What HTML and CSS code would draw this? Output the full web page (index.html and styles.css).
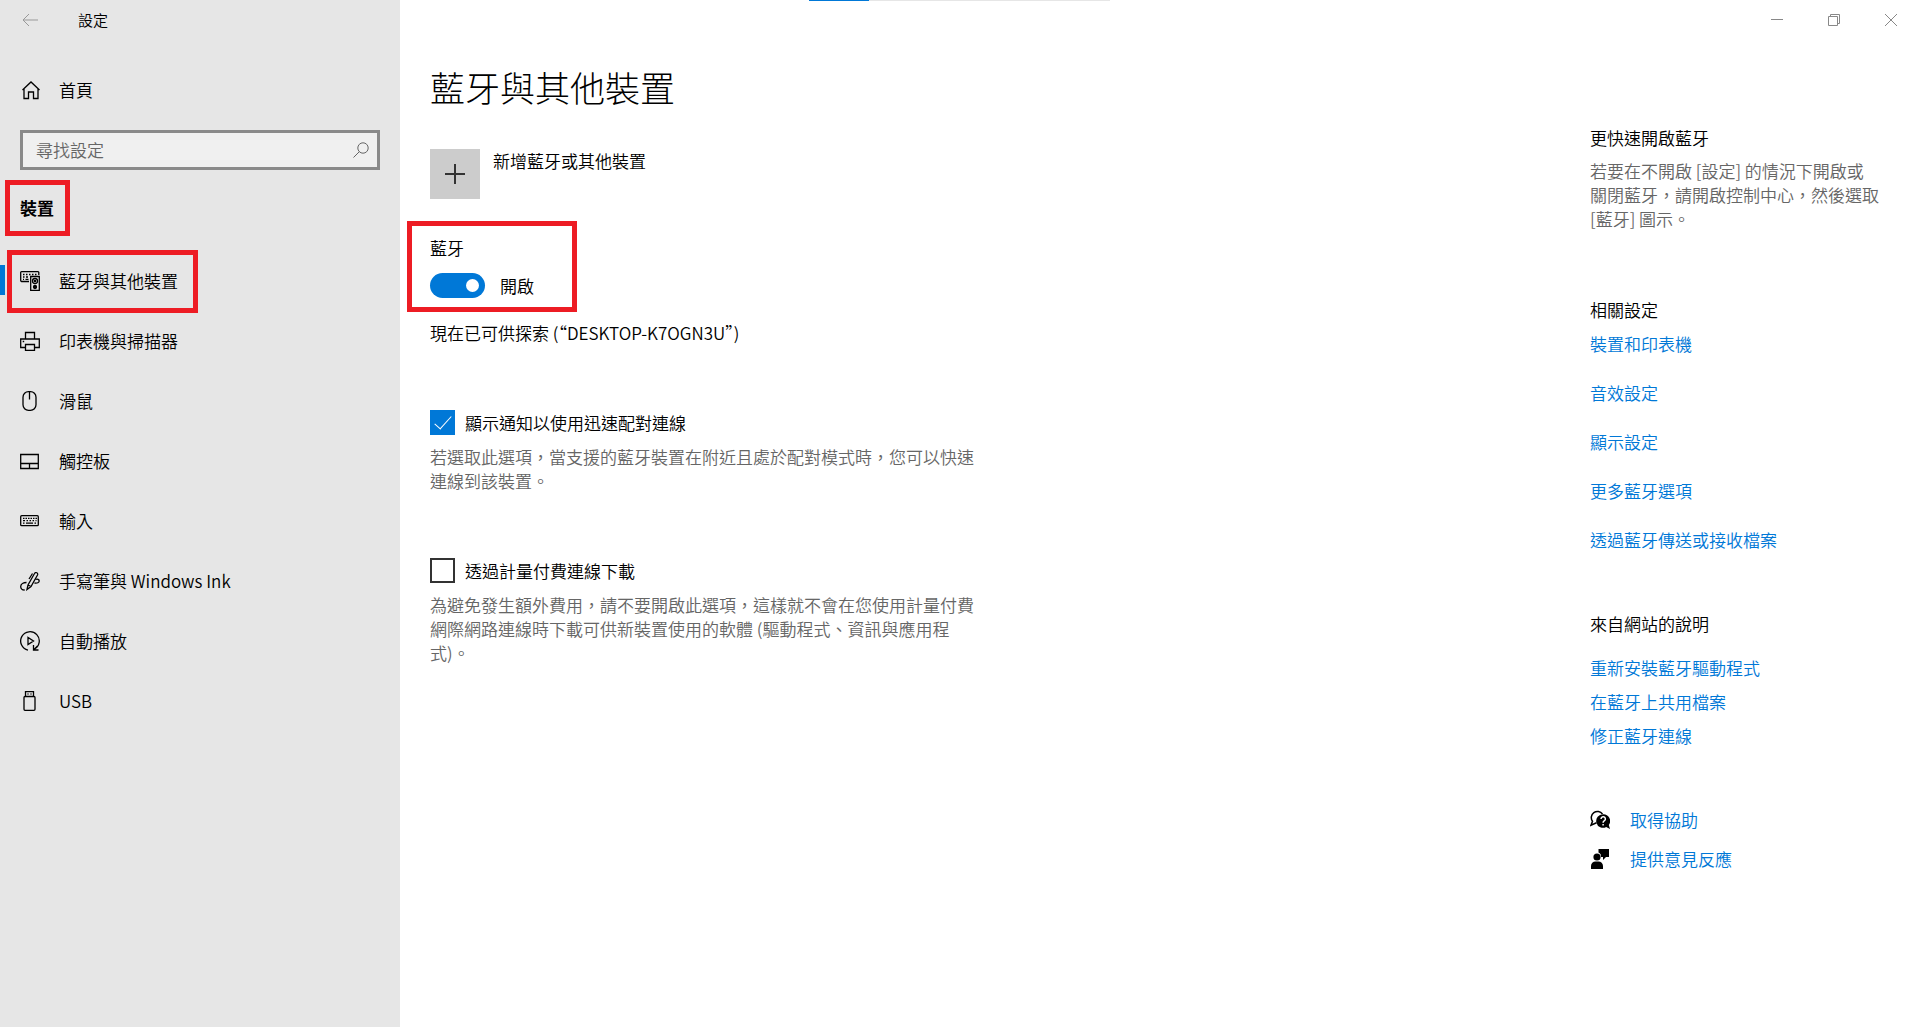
FILE: index.html
```html
<!DOCTYPE html>
<html lang="zh-Hant">
<head>
    <meta charset="UTF-8">
    <meta name="viewport" content="width=device-width, initial-scale=1">
    <title>設定</title>
    <link rel="stylesheet" href="styles.css">
</head>
<body>
    <div class="progress"><div class="progress-value"></div></div>

    <div class="window">
        <div class="sidebar">
            <div class="title-bar">
                <button class="back" type="button" aria-label="返回">
                    <svg width="16" height="14" viewBox="0 0 16 14"><path d="M7 1 1 7l6 6M1 7h15"/></svg>
                </button>
                <span>設定</span>
            </div>

            <a class="nav-item home" href="#">
                <svg class="icon" viewBox="0 0 20 20"><path d="M2.500 10 11 2l8.500 8M4 8.500V18.500h4.500V12h5v6.500H18V8.500"/></svg>
                <span>首頁</span>
            </a>

            <form class="search">
                <input type="search" placeholder="尋找設定" aria-label="尋找設定">
                <svg width="16" height="16" viewBox="0 0 16 16"><circle cx="10" cy="6" r="5.200"/><path d="M6.300 9.700 .5 15.500"/></svg>
            </form>

            <h2 class="section"><span class="marked">裝置</span></h2>

            <nav class="nav">
                <a class="nav-item active" href="#">
                    <svg class="icon" viewBox="0 0 20 20">
                        <path d="M9 10.500H1.500A1 1 0 0 1 .7 9.500V1.500a.8.8 0 0 1 .8-.8h16.500a.8.8 0 0 1 .8.8V4"/>
                        <path d="M3 3.500h1.500M6 3.500h1.500M9 3.500h1.500M12 3.500h1.500M15 3.500h1.500M3 6h1.500M6 6h2M3 8.300h1M5.500 8.300h3"/>
                        <path d="M10.700 5.500h8.600v13.800h-8.600z"/>
                        <circle cx="15" cy="10" r="2.500"/><circle cx="15" cy="10" r=".7"/><circle class="fill" cx="15" cy="16" r="1.500"/>
                    </svg>
                    <span>藍牙與其他裝置</span>
                </a>
                <a class="nav-item" href="#">
                    <svg class="icon" viewBox="0 0 20 20">
                        <path d="M5.500 8V1.500h9V8M5.500 16.500H.7V8h18.600v8.500h-4.800M5.500 13.500h9v5.800h-9zM2.700 10.500h1.500"/>
                    </svg>
                    <span>印表機與掃描器</span>
                </a>
                <a class="nav-item" href="#">
                    <svg class="icon" viewBox="0 0 20 20"><rect x="3" y=".7" width="13" height="18.600" rx="5.500"/><path d="M9.500 1v7.500"/></svg>
                    <span>滑鼠</span>
                </a>
                <a class="nav-item" href="#">
                    <svg class="icon" viewBox="0 0 20 20"><path d="M.7 3.500h17.600v14H.7zM.7 12.500h17.600M9.500 12.500v5"/></svg>
                    <span>觸控板</span>
                </a>
                <a class="nav-item" href="#">
                    <svg class="icon" viewBox="0 0 20 20">
                        <rect x=".7" y="4.700" width="17.600" height="10" rx="1"/>
                        <path d="M3 7.300h1.500M5.500 7.300H7M8 7.300h1.500M10.500 7.300H12M13 7.300h1.500M15.500 7.300H17M3 9.700h2M6.500 9.700H8M9.500 9.700H11M12.500 9.700H14M15.500 9.700h1M3 12.200h1.500M6 12.200h7M14.500 12.200H16"/>
                    </svg>
                    <span>輸入</span>
                </a>
                <a class="nav-item" href="#">
                    <svg class="icon" viewBox="0 0 20 20">
                        <path d="M7 18.500 8 14 14.500 2.500a1.600 1.600 0 0 1 3 1.500L11 15.500 7 18.500ZM8 14l3 1.500M12.500 2.500 9 8"/>
                        <path d="M6.500 11.500c-3 0-5.800 1.500-5.800 4 0 2 1.500 3.500 4 3.500M15.500 8.500c2-.7 3.700 0 3.700 1.500s-2 2.500-4.700 2"/>
                    </svg>
                    <span>手寫筆與 Windows Ink</span>
                </a>
                <a class="nav-item" href="#">
                    <svg class="icon" viewBox="0 0 20 20">
                        <path d="M8 19.100A9.300 9.300 0 1 1 14 18.400M13.500 14v5h5M13.500 19l4-4M8 6.500v7l5.500-3.500z"/>
                    </svg>
                    <span>自動播放</span>
                </a>
                <a class="nav-item" href="#">
                    <svg class="icon" viewBox="0 0 20 20">
                        <path d="M5.500 5.500V.7h8v4.800M7.500 3h1M10.500 3h1"/><rect x="4" y="5.500" width="11" height="13.800" rx="1"/>
                    </svg>
                    <span>USB</span>
                </a>
            </nav>
        </div>

        <div class="main">
            <div class="window-controls">
                <button type="button" aria-label="最小化"><svg width="12" height="12" viewBox="0 0 12 12"><path d="M0 5.500h12"/></svg></button>
                <button type="button" aria-label="還原"><svg width="12" height="12" viewBox="0 0 12 12"><path d="M.5 2.500h9v9h-9zM2.500 2.500v-2h9v9h-2"/></svg></button>
                <button type="button" aria-label="關閉"><svg width="12" height="12" viewBox="0 0 12 12"><path d="m0 0 12 12M12 0 0 12"/></svg></button>
            </div>

            <div class="page">
                <main class="content">
                    <h1>藍牙與其他裝置</h1>

                    <button class="add-device" type="button">
                        <span class="add-icon"><svg width="20" height="20" viewBox="0 0 20 20"><path d="M10 0v20M0 10h20"/></svg></span>
                        <span>新增藍牙或其他裝置</span>
                    </button>

                    <div class="bluetooth">
                        <label for="bluetooth">藍牙</label>
                        <div class="switch-row">
                            <input class="switch" type="checkbox" role="switch" id="bluetooth" checked>
                            <span>開啟</span>
                        </div>
                    </div>
                    <p class="discover">現在已可供探索 (“DESKTOP-K7OGN3U”)</p>

                    <div class="option">
                        <div class="option-row">
                            <input class="checkbox" type="checkbox" id="swift-pair" checked>
                            <label for="swift-pair">顯示通知以使用迅速配對連線</label>
                        </div>
                        <p class="note">若選取此選項，當支援的藍牙裝置在附近且處於配對模式時，您可以快速連線到該裝置。</p>
                    </div>

                    <div class="option">
                        <div class="option-row">
                            <input class="checkbox" type="checkbox" id="metered">
                            <label for="metered">透過計量付費連線下載</label>
                        </div>
                        <p class="note">為避免發生額外費用，請不要開啟此選項，這樣就不會在您使用計量付費網際網路連線時下載可供新裝置使用的軟體 (驅動程式、資訊與應用程式)。</p>
                    </div>
                </main>

                <aside class="aside">
                    <h3>更快速開啟藍牙</h3>
                    <p class="note">若要在不開啟 [設定] 的情況下開啟或關閉藍牙，請開啟控制中心，然後選取 [藍牙] 圖示。</p>

                    <h3>相關設定</h3>
                    <div class="links related">
                        <a href="#">裝置和印表機</a>
                        <a href="#">音效設定</a>
                        <a href="#">顯示設定</a>
                        <a href="#">更多藍牙選項</a>
                        <a href="#">透過藍牙傳送或接收檔案</a>
                    </div>

                    <h3>來自網站的說明</h3>
                    <div class="links web-help">
                        <a href="#">重新安裝藍牙驅動程式</a>
                        <a href="#">在藍牙上共用檔案</a>
                        <a href="#">修正藍牙連線</a>
                    </div>

                    <div class="links support">
                        <a href="#">
                            <svg width="20" height="20" viewBox="0 0 20 20">
                                <path class="line" d="M6.500 12.800 1 15.300l1.500-4A6 6 0 1 1 12.500 4"/>
                                <path d="M13 4.200a6.800 6.800 0 1 0 3.200 12.800L20 19l-1.200-4A6.800 6.800 0 0 0 13 4.200Z"/>
                                <path class="mark" d="M11 8.900a2.200 2.200 0 1 1 3.200 2c-.8.500-1.100.9-1.100 1.900M13.100 14v1.600"/>
                            </svg>
                            <span>取得協助</span>
                        </a>
                        <a href="#">
                            <svg width="20" height="20" viewBox="0 0 20 20">
                                <path d="M8.500 0H19v8h-3l-3 3V8h-2A4.500 4.500 0 0 0 8.500 3.500z"/>
                                <circle cx="7" cy="8" r="3.600"/>
                                <path d="M1 20v-3a4.500 4.500 0 0 1 4.500-4.500h3A4.500 4.500 0 0 1 13 17v3z"/>
                            </svg>
                            <span>提供意見反應</span>
                        </a>
                    </div>
                </aside>
            </div>
        </div>
    </div>
</body>
</html>
```
FILE: styles.css
```css
*, *::before, *::after { box-sizing: border-box; }
body { margin: 0; font-family: "Noto Sans CJK TC", sans-serif; font-size: 17px; font-weight: 350; line-height: 24px; color: #000; background: #fff; }
h1, h2, h3, p { margin: 0; }
a { color: #0078d7; text-decoration: none; }
button { padding: 0; border: 0; background: none; font: inherit; color: inherit; }
svg { flex: none; fill: none; stroke: currentColor; }

.window { display: flex; min-height: 100vh; }
.progress { position: absolute; top: 0; left: 2px; right: 0; width: 301px; height: 1px; margin: 0 auto; background: #e6e6e6; }
.progress-value { width: 20%; height: 1px; background: #0078d7; }

/* left pane */
.sidebar { flex: none; width: 400px; background: #e6e6e6; }
.title-bar { display: flex; align-items: center; gap: 40px; height: 40px; padding-left: 22px; font-size: 15px; }
.back { display: flex; color: #999; }
.nav-item { position: relative; display: flex; align-items: center; gap: 19px; height: 60px; padding-left: 20px; color: #000; }
.icon { width: 20px; height: 20px; stroke-width: 1.3; }
.icon .fill { fill: currentColor; }
.home { margin-top: 20px; }
.search { display: flex; align-items: center; height: 40px; margin: 10px 20px 0; padding: 0 8px 0 13px; border: 3px solid #8a8a8a; background: #f0f0f0; color: #666; }
.search input { flex: 1; min-width: 0; padding: 0; border: 0; outline: 0; background: none; font: inherit; color: #000; }
.search input::placeholder { color: #666; opacity: 1; }
.section { display: flex; align-items: center; height: 60px; margin-top: 8px; padding-left: 20px; font-size: 17px; font-weight: 700; }
.marked { position: relative; }
.nav { margin-top: 13px; }
.active::before { content: ""; position: absolute; left: 0; top: 14px; width: 5px; height: 30px; background: #0078d7; }

/* red highlight frames */
.marked::after, .active::after, .bluetooth::after { content: ""; position: absolute; border: 5px solid #ed1c24; pointer-events: none; }
.marked::after { inset: -16px -16px -16px -15px; }
.active::after { left: 7px; top: -1px; width: 191px; height: 63px; }
.bluetooth::after { left: -23px; top: -15px; width: 170px; height: 91px; }

/* right pane */
.main { flex: 1; min-width: 0; }
.window-controls { display: flex; justify-content: flex-end; align-items: center; gap: 45px; height: 40px; padding-right: 20px; color: #888; }
.window-controls button { display: flex; }
.page { display: flex; justify-content: space-between; padding-left: 30px; }
.content { padding-top: 24px; }
h1 { font-size: 35px; font-weight: 300; line-height: 46px; }
.add-device { display: flex; gap: 13px; margin-top: 39px; text-align: left; }
.add-icon { display: flex; align-items: center; justify-content: center; width: 50px; height: 50px; background: #ccc; }
.add-icon svg { stroke-width: 2; stroke: #333; }
.bluetooth { position: relative; margin-top: 37px; }
.bluetooth label { display: block; }
.switch-row { display: flex; align-items: center; gap: 15px; height: 25px; margin-top: 13px; }
.switch { appearance: none; display: flex; align-items: center; justify-content: flex-end; width: 55px; height: 25px; margin: 0; padding: 6px; border-radius: 13px; background: #0078d7; }
.switch::after { content: ""; width: 13px; height: 13px; border-radius: 50%; background: #fff; }
.discover { margin-top: 23px; }
.option { margin-top: 65px; }
.option-row { display: flex; align-items: center; gap: 10px; height: 25px; }
.checkbox { appearance: none; position: relative; width: 25px; height: 25px; margin: 0; border: 2px solid #333; background: #fff; }
.checkbox:checked { border-color: #0078d7; background: #0078d7; }
.checkbox:checked::after { content: ""; position: absolute; left: 7px; top: 0; width: 8px; height: 17px; border: solid #fff; border-width: 0 1px 1px 0; transform: rotate(42deg); }
.note { color: #666; }
.option .note { max-width: 555px; margin-top: 10px; }

.aside { flex: none; width: 327px; padding-top: 86px; }
.aside h3 { font-size: 17px; font-weight: 350; }
.aside .note { max-width: 290px; margin: 9px 0 67px; }
.links { display: flex; flex-direction: column; align-items: flex-start; }
.related { gap: 25px; margin: 10px 0 60px; }
.web-help { gap: 10px; margin: 20px 0 60px; }
.support { gap: 15px; }
.support a { display: flex; align-items: center; gap: 20px; }
.support svg { fill: #000; stroke: none; }
.support .line { fill: none; stroke: #000; stroke-width: 1.5; }
.support .mark { fill: none; stroke: #fff; stroke-width: 1.5; }
```
